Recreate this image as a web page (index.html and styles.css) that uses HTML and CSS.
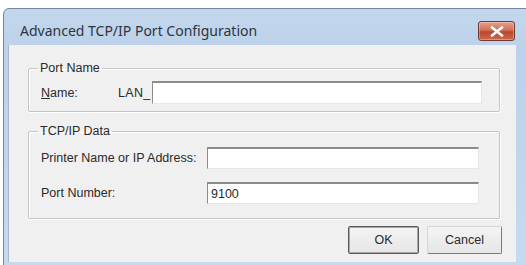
FILE: index.html
```html
<!DOCTYPE html>
<html>
<head>
<meta charset="utf-8">
<link rel="stylesheet" href="styles.css">
</head>
<body>
<div class="window">
  <div class="titlebar">
    <span class="title">Advanced TCP/IP Port Configuration</span>
    <span class="close"><svg width="14" height="11" viewBox="0 0 14 11"><path d="M2 1.5 L12 9.5 M12 1.5 L2 9.5" stroke="#fff" stroke-width="2.6" stroke-linecap="round"/></svg></span>
  </div>
  <div class="client">
    <fieldset class="group group-name">
      <legend>Port Name</legend>
      <div class="row">
        <label class="lbl lbl-name"><u>N</u>ame:</label>
        <span class="prefix">LAN_</span>
        <input class="field" type="text" value="">
      </div>
    </fieldset>
    <fieldset class="group group-data">
      <legend>TCP/IP Data</legend>
      <div class="row">
        <label class="lbl lbl-wide">Printer Name or IP Address:</label>
        <input class="field" type="text" value="">
      </div>
      <div class="row">
        <label class="lbl lbl-wide">Port Number:</label>
        <input class="field" type="text" value="9100">
      </div>
    </fieldset>
    <div class="buttons">
      <button class="btn btn-ok">OK</button>
      <button class="btn btn-cancel">Cancel</button>
    </div>
  </div>
</div>
</body>
</html>
```
FILE: styles.css
```css
html, body {
  margin: 0;
  padding: 0;
  background: #ffffff;
  width: 526px;
  height: 265px;
  overflow: hidden;
}
.window {
  margin: 8px 0 0 3px;
  width: 530px;
  height: 270px;
  border: 1px solid #75879a;
  border-radius: 6px 6px 0 0;
  background: linear-gradient(#c3d6ec, #bcd2ea 40px, #c6daf0);
  box-sizing: border-box;
  font-family: "Liberation Sans", Arial, sans-serif;
  font-size: 12.5px;
  color: #2a2a2a;
}
.titlebar {
  height: 36px;
  display: flex;
  justify-content: space-between;
  align-items: flex-start;
}
.title {
  font-family: "Noto Sans", "Open Sans", sans-serif;
  font-size: 14px;
  color: #2c3440;
  padding: 14px 0 0 16px;
  line-height: 16px;
}
.close {
  margin: 12px 17px 0 0;
  width: 37px;
  height: 20px;
  box-sizing: border-box;
  border: 1px solid #6e3a30;
  border-radius: 3px;
  background: linear-gradient(#e4a08e, #d07158 45%, #b9482e 55%, #cc6a4e);
  display: flex;
  align-items: center;
  justify-content: center;
  box-shadow: inset 0 0 0 1px rgba(255,255,255,0.3);
}
.client {
  margin-left: 4px;
  width: 508px;
  height: 217px;
  background: #f0f0f0;
  padding: 16px 14px 0 19px;
  box-sizing: border-box;
  border-left: 1px solid #a9b9c9;
}
.group {
  margin: 0 2px 0 0;
  border: 1px solid #c4c4c4;
  border-radius: 2px;
  box-shadow: inset 1px 1px 0 #ffffff, 1px 1px 0 #ffffff;
  padding: 6px 17px 7px 12px;
  min-width: 0;
}
.group legend {
  padding: 0 2px;
  margin-left: -3px;
  line-height: 14px;
  color: #2a2a2a;
}
.group-name {
  margin-bottom: 12px;
}
.group-data {
  padding: 9px 20px 14px 12px;
}
.row {
  display: flex;
  align-items: center;
}
.group-data .row + .row {
  margin-top: 13px;
}
.lbl {
  flex: none;
  color: #2a2a2a;
}
.lbl-name {
  width: 77px;
}
.prefix {
  width: 34px;
  flex: none;
  letter-spacing: 0.3px;
}
.lbl-wide {
  width: 166px;
}
.field {
  flex: 1;
  min-width: 0;
  height: 23px;
  box-sizing: border-box;
  margin: 0;
  padding: 0 3px;
  background: #ffffff;
  border-top: 2px solid #8c8c8c;
  border-left: 1px solid #8c8c8c;
  border-right: 1px solid #e6e6e6;
  border-bottom: 1px solid #e6e6e6;
  font-family: "Liberation Sans", Arial, sans-serif;
  font-size: 12.5px;
  color: #2a2a2a;
  outline: none;
}
.group-data .field {
  height: 22px;
}
.buttons {
  display: flex;
  justify-content: flex-end;
  gap: 8px;
  margin-top: 7px;
}
.btn {
  height: 28px;
  box-sizing: border-box;
  background: linear-gradient(#f4f4f4, #e6e6e6);
  font-family: "Liberation Sans", Arial, sans-serif;
  font-size: 12.5px;
  color: #2a2a2a;
  padding: 0;
  border-radius: 2px;
}
.btn-ok {
  width: 71px;
  border: 1px solid #5a5a5a;
  box-shadow: inset 0 0 0 1px #a8a8a8;
}
.btn-cancel {
  width: 75px;
  border: 1px solid;
  border-color: #d6d6d6 #7a7a7a #7a7a7a #d6d6d6;
}
```
